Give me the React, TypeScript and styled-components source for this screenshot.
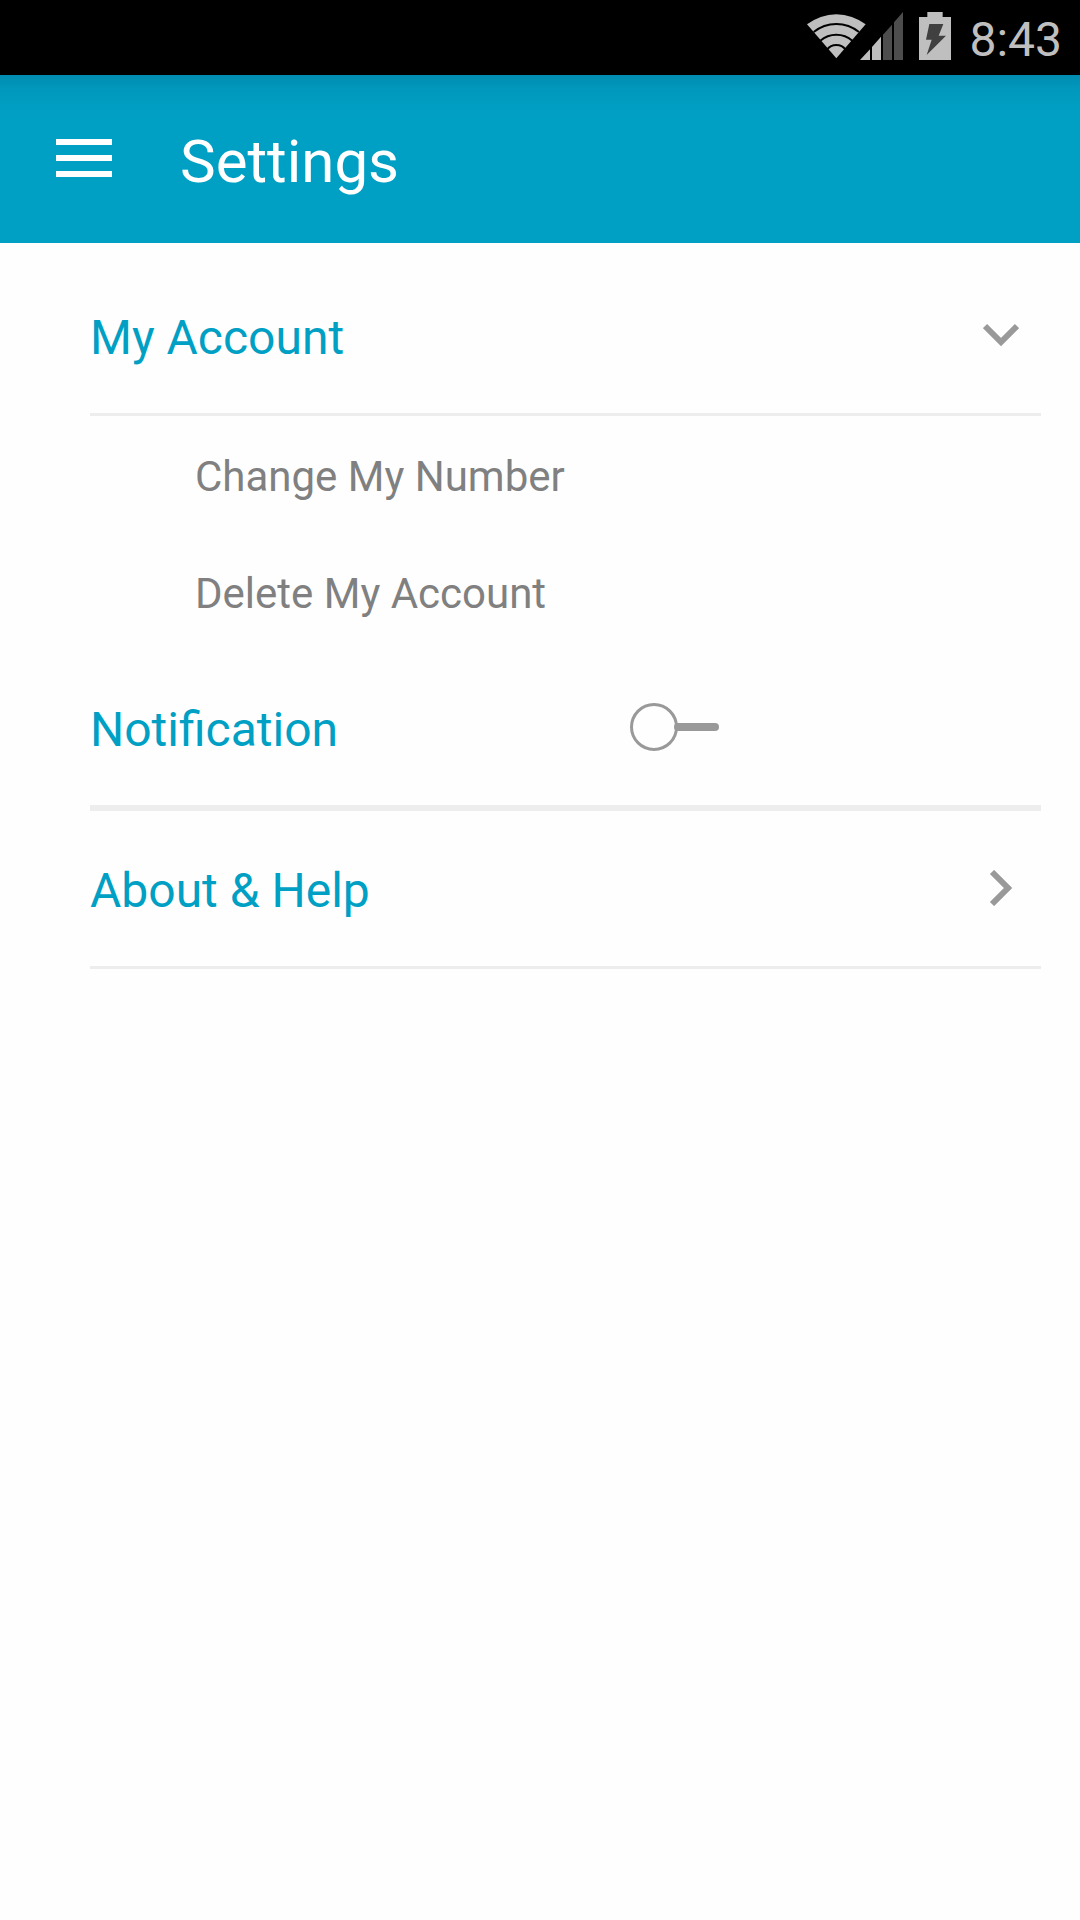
import React, { useState } from "react";
import styled, { createGlobalStyle } from "styled-components";

const GlobalStyle = createGlobalStyle`
  *, *::before, *::after { box-sizing: border-box; }
  body {
    margin: 0;
    background: #fefefe;
    font-family: Roboto, "Liberation Sans", sans-serif;
  }
`;

const StatusBar = styled.div`
  display: flex;
  justify-content: flex-end;
  align-items: flex-start;
  height: 75px;
  padding: 12px 18px 0 0;
  background: #000;
  color: #bfbfbf;
`;

const StatusIcons = styled.div`
  display: flex;
  gap: 16px;
`;

const Clock = styled.time`
  margin-left: 18px;
  font-size: 48px;
  line-height: 56px;
`;

const AppBar = styled.header`
  display: flex;
  align-items: center;
  gap: 68px;
  height: 168px;
  padding: 6px 56px 0;
  color: #fff;
  background: linear-gradient(to bottom, #008cb0 0, #0098bc 14px, #009ec2 30px, #00a0c4 46px);
`;

const IconButton = styled.button`
  display: flex;
  padding: 0 0 8px;
  border: 0;
  background: none;
  color: inherit;
  cursor: pointer;
`;

const Title = styled.h1`
  margin: 0;
  font-size: 60px;
  font-weight: 400;
  line-height: 70px;
`;

const List = styled.main`
  padding: 15px 39px 0 90px;
`;

const Row = styled.div<{ $line?: number }>`
  display: flex;
  align-items: center;
  width: 100%;
  border-bottom: ${({ $line = 3 }) => $line}px solid #ededed;
`;

const RowButton = styled.button`
  display: flex;
  align-items: center;
  justify-content: space-between;
  width: 100%;
  padding: 0 22px 0 0;
  border: 0;
  background: none;
  color: #999;
  font: inherit;
  text-align: left;
  cursor: pointer;
`;

const IconSlot = styled.span`
  display: flex;
  padding-bottom: 2px;
`;

const Label = styled.span`
  display: block;
  padding: 52px 0 47px;
  color: #00a0c4;
  font-size: 48px;
  line-height: 56px;
`;

const SwitchRow = styled.label`
  display: grid;
  grid-template-columns: 21fr 16fr;
  align-items: center;
  width: 100%;
  cursor: pointer;
`;

const SubItem = styled.button`
  display: block;
  width: 100%;
  padding: 36px 0 32px 105px;
  border: 0;
  background: none;
  color: #808080;
  font-family: inherit;
  font-size: 42px;
  line-height: 49px;
  text-align: left;
  cursor: pointer;
`;

const Switch = styled.input`
  appearance: none;
  display: flex;
  align-items: center;
  width: 89px;
  height: 48px;
  margin: 0 0 2px;
  cursor: pointer;

  &::before {
    content: "";
    flex: none;
    width: 48px;
    height: 48px;
    border: 3px solid #999;
    border-radius: 50%;
  }
  &::after {
    content: "";
    flex: 1;
    height: 8px;
    margin-left: -4px;
    border-radius: 4px;
    background: #999;
  }
  &:checked { flex-direction: row-reverse; }
  &:checked::before { border-color: #00a0c4; }
  &:checked::after { margin: 0 -4px 0 0; background: #00a0c4; }
`;

const WifiIcon = () => (
  <svg width="59" height="46" viewBox="0 0 177 138" aria-hidden="true">
    <path d="M88 133 0 31A144 144 0 0 1 176 31Z" fill="#bfbfbf" />
    <g fill="none" stroke="#000" strokeWidth="6">
      <path d="M20 54A108 108 0 0 1 156 54" />
      <path d="M40 80A73 73 0 0 1 136 80" />
      <path d="M60 107A35 35 0 0 1 116 107" />
    </g>
  </svg>
);

const SignalIcon = () => (
  <svg width="43" height="48" viewBox="0 0 129 144" aria-hidden="true">
    <path d="M0 144 30 112V144ZM36 105 63 74V144H36Z" fill="#bfbfbf" />
    <path d="M69 68 96 38V144H69ZM102 31 129 0V144H102Z" fill="#4d4d4d" />
  </svg>
);

const BatteryIcon = () => (
  <svg width="32" height="48" viewBox="0 0 96 144" aria-hidden="true">
    <path d="M25 0H71V15H96V144H0V15H25Z" fill="#bfbfbf" />
    <path d="M31 36H73L59 71H81L23 129 38 83H21Z" fill="#404040" />
  </svg>
);

const MenuIcon = () => (
  <svg width="56" height="38" viewBox="0 0 56 38" fill="currentColor" aria-hidden="true">
    <path d="M0 0H56V6H0ZM0 16H56V22H0ZM0 32H56V38H0Z" />
  </svg>
);

const ChevronDown = () => (
  <svg width="36" height="36" viewBox="0 0 36 36" fill="none" stroke="currentColor" strokeWidth="6" aria-hidden="true">
    <path d="M2 9 18 25 34 9" />
  </svg>
);

const ChevronRight = () => (
  <svg width="36" height="36" viewBox="0 0 36 36" fill="none" stroke="currentColor" strokeWidth="6" aria-hidden="true">
    <path d="M9 2 25 18 9 34" />
  </svg>
);

const Signals = styled.div`
  display: flex;
  align-items: flex-end;

  svg + svg { margin-left: -6px; }
`;

export default function App() {
  const [open, setOpen] = useState(true);
  const [notify, setNotify] = useState(false);

  return (
    <>
      <GlobalStyle />
      <StatusBar>
        <StatusIcons>
          <Signals>
            <WifiIcon />
            <SignalIcon />
          </Signals>
          <BatteryIcon />
        </StatusIcons>
        <Clock>8:43</Clock>
      </StatusBar>
      <AppBar>
        <IconButton type="button" aria-label="Open menu">
          <MenuIcon />
        </IconButton>
        <Title>Settings</Title>
      </AppBar>
      <List>
        <Row>
          <RowButton type="button" aria-expanded={open} onClick={() => setOpen(!open)}>
            <Label>My Account</Label>
            <IconSlot>{open ? <ChevronDown /> : <ChevronRight />}</IconSlot>
          </RowButton>
        </Row>
        {open && (
          <>
            <SubItem type="button">Change My Number</SubItem>
            <SubItem type="button">Delete My Account</SubItem>
          </>
        )}
        <Row $line={6}>
          <SwitchRow>
            <Label>Notification</Label>
            <Switch
              type="checkbox"
              role="switch"
              checked={notify}
              onChange={(e) => setNotify(e.target.checked)}
            />
          </SwitchRow>
        </Row>
        <Row>
          <RowButton type="button">
            <Label>About &amp; Help</Label>
            <IconSlot>
              <ChevronRight />
            </IconSlot>
          </RowButton>
        </Row>
      </List>
    </>
  );
}
